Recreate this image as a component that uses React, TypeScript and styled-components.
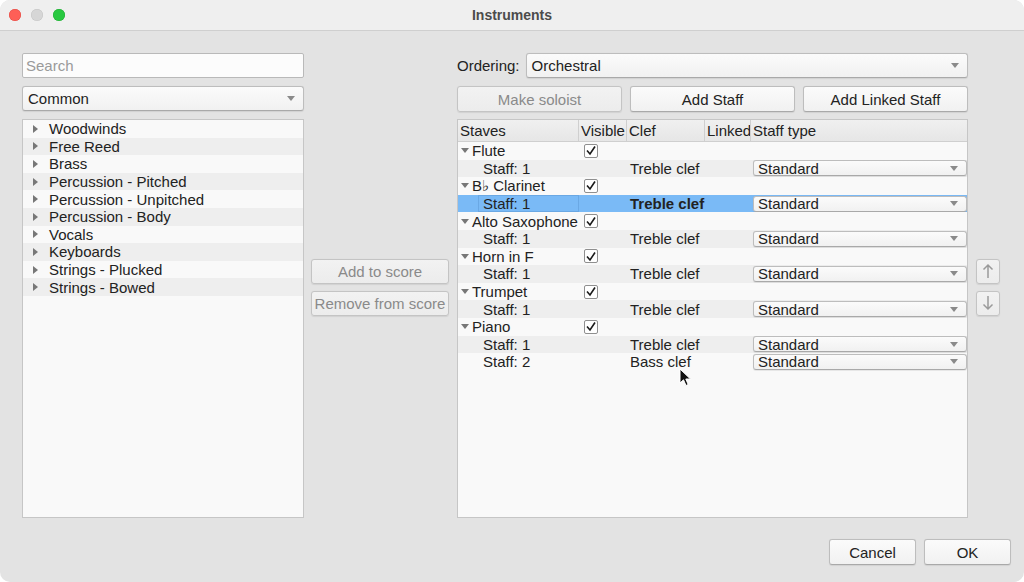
import React from "react";
import styled, { createGlobalStyle, css } from "styled-components";

const GlobalStyle = createGlobalStyle`
  html, body {
    margin: 0;
    padding: 0;
    background: #ffffff;
  }
  body {
    font-family: "Liberation Sans", Arial, sans-serif;
    font-size: 15px;
    color: #222;
  }
`;

const families = [
  "Woodwinds",
  "Free Reed",
  "Brass",
  "Percussion - Pitched",
  "Percussion - Unpitched",
  "Percussion - Body",
  "Vocals",
  "Keyboards",
  "Strings - Plucked",
  "Strings - Bowed",
];

type Row =
  | { kind: "part"; name: string }
  | { kind: "staff"; name: string; clef: string; selected?: boolean };

const rows: Row[] = [
  { kind: "part", name: "Flute" },
  { kind: "staff", name: "Staff: 1", clef: "Treble clef" },
  { kind: "part", name: "B\u266D Clarinet" },
  { kind: "staff", name: "Staff: 1", clef: "Treble clef", selected: true },
  { kind: "part", name: "Alto Saxophone" },
  { kind: "staff", name: "Staff: 1", clef: "Treble clef" },
  { kind: "part", name: "Horn in F" },
  { kind: "staff", name: "Staff: 1", clef: "Treble clef" },
  { kind: "part", name: "Trumpet" },
  { kind: "staff", name: "Staff: 1", clef: "Treble clef" },
  { kind: "part", name: "Piano" },
  { kind: "staff", name: "Staff: 1", clef: "Treble clef" },
  { kind: "staff", name: "Staff: 2", clef: "Bass clef" },
];

const COLS = "121px 48px 78px 46px 1fr";

const App = () => {
  return (
    <>
      <GlobalStyle />
      <Window>
        <TitleBar>
          <Lights>
            <Light $color="#fe5f57" $border="#e14942" />
            <Light $color="#d6d6d6" $border="#c4c4c4" />
            <Light $color="#28c840" $border="#1eaa32" />
          </Lights>
          <Title>Instruments</Title>
        </TitleBar>

        <Body>
          <Main>
            <LeftColumn>
              <SearchInput placeholder="Search" />
              <Combo>
                <span>Common</span>
                <Caret />
              </Combo>
              <ListBox>
                {families.map((f, i) => (
                  <ListRow key={f} $odd={i % 2 === 1}>
                    <RightTriangle />
                    <span>{f}</span>
                  </ListRow>
                ))}
              </ListBox>
            </LeftColumn>

            <MiddleColumn>
              <Button disabled>Add to score</Button>
              <Button disabled>Remove from score</Button>
            </MiddleColumn>

            <RightColumn>
              <OrderingRow>
                <Label>Ordering:</Label>
                <Combo>
                  <span>Orchestral</span>
                  <Caret />
                </Combo>
              </OrderingRow>
              <ButtonRow>
                <Button disabled>Make soloist</Button>
                <Button>Add Staff</Button>
                <Button>Add Linked Staff</Button>
              </ButtonRow>
              <Table>
                <HeaderRow>
                  <HeaderCell>Staves</HeaderCell>
                  <HeaderCell>Visible</HeaderCell>
                  <HeaderCell>Clef</HeaderCell>
                  <HeaderCell>Linked</HeaderCell>
                  <HeaderCell $last>Staff type</HeaderCell>
                </HeaderRow>
                {rows.map((r, i) =>
                  r.kind === "part" ? (
                    <TableRow key={i} $odd={i % 2 === 1}>
                      <Cell>
                        <DownTriangle />
                        {r.name}
                      </Cell>
                      <Cell $center>
                        <Check>
                          <svg width="12" height="11" viewBox="0 0 12 11">
                            <path
                              d="M2 5.5 L5 9 L10 1.5"
                              fill="none"
                              stroke="#1a1a1a"
                              strokeWidth="1.6"
                            />
                          </svg>
                        </Check>
                      </Cell>
                      <Cell />
                      <Cell />
                      <Cell />
                    </TableRow>
                  ) : (
                    <TableRow key={i} $odd={i % 2 === 1} $selected={r.selected}>
                      <Cell $indent $focus={r.selected}>
                        {r.name}
                      </Cell>
                      <Cell />
                      <Cell $bold={r.selected}>{r.clef}</Cell>
                      <Cell />
                      <Cell $plain>
                        <CellCombo>
                          <span>Standard</span>
                          <Caret />
                        </CellCombo>
                      </Cell>
                    </TableRow>
                  )
                )}
                <Cursor>
                  <svg width="14" height="20" viewBox="0 0 14 20">
                    <path
                      d="M1 1 L1 15 L4.5 11.8 L7 17.5 L9.2 16.5 L6.8 11 L11.5 11 Z"
                      fill="#111"
                      stroke="#fff"
                      strokeWidth="1"
                      strokeLinejoin="round"
                    />
                  </svg>
                </Cursor>
              </Table>
            </RightColumn>

            <ArrowColumn>
              <ArrowButton disabled>
                <svg width="12" height="16" viewBox="0 0 12 16">
                  <path d="M6 2 V15 M1.5 6.5 L6 2 L10.5 6.5" fill="none" stroke="#9a9a9a" strokeWidth="1.5" />
                </svg>
              </ArrowButton>
              <ArrowButton disabled>
                <svg width="12" height="16" viewBox="0 0 12 16">
                  <path d="M6 1 V14 M1.5 9.5 L6 14 L10.5 9.5" fill="none" stroke="#9a9a9a" strokeWidth="1.5" />
                </svg>
              </ArrowButton>
            </ArrowColumn>
          </Main>

          <Footer>
            <Button $wide>Cancel</Button>
            <Button $wide>OK</Button>
          </Footer>
        </Body>
      </Window>
    </>
  );
};

const Window = styled.div`
  width: 1024px;
  height: 582px;
  display: flex;
  flex-direction: column;
  background: #e3e3e3;
  border-radius: 10px;
  overflow: hidden;
  box-sizing: border-box;
`;

const TitleBar = styled.div`
  position: relative;
  height: 31px;
  flex: none;
  display: flex;
  align-items: center;
  justify-content: center;
  background: #efefef;
  border-bottom: 1px solid #cfcfcf;
  box-sizing: border-box;
`;

const Lights = styled.div`
  position: absolute;
  left: 9px;
  top: 9px;
  display: flex;
  gap: 10px;
`;

const Light = styled.div<{ $color: string; $border: string }>`
  width: 12px;
  height: 12px;
  border-radius: 50%;
  background: ${(p) => p.$color};
  box-shadow: inset 0 0 0 0.5px ${(p) => p.$border};
`;

const Title = styled.div`
  font-size: 14px;
  font-weight: bold;
  color: #4b4b4b;
`;

const Body = styled.div`
  flex: 1;
  display: flex;
  flex-direction: column;
  padding: 22px 13px 17px 22px;
  box-sizing: border-box;
`;

const Main = styled.div`
  height: 465px;
  display: flex;
`;

const LeftColumn = styled.div`
  width: 282px;
  flex: none;
  display: flex;
  flex-direction: column;
  gap: 8px;
`;

const MiddleColumn = styled.div`
  width: 138px;
  flex: none;
  margin-left: 7px;
  display: flex;
  flex-direction: column;
  justify-content: center;
  gap: 7px;
  padding-top: 3px;

  & > button {
    flex: none;
    height: 25px;
  }
`;

const RightColumn = styled.div`
  width: 511px;
  flex: none;
  margin-left: 8px;
  display: flex;
  flex-direction: column;
  gap: 8px;
`;

const ArrowColumn = styled.div`
  width: 24px;
  flex: none;
  margin-left: 8px;
  display: flex;
  flex-direction: column;
  justify-content: center;
  gap: 7px;
  padding-top: 3px;
`;

const SearchInput = styled.input`
  height: 25px;
  box-sizing: border-box;
  border: 1px solid #b9b9b9;
  border-radius: 2px;
  background: #fcfcfc;
  padding: 0 3px;
  font: inherit;
  font-size: 15px;
  color: #222;
  outline: none;
  &::placeholder {
    color: #9a9a9a;
  }
`;

const controlSurface = css`
  box-sizing: border-box;
  border: 1px solid #bdbdbd;
  border-bottom-color: #a9a9a9;
  border-radius: 3px;
  background: linear-gradient(#fbfbfb, #f1f1f1);
  box-shadow: 0 0.5px 1px rgba(0, 0, 0, 0.08);
`;

const Combo = styled.div`
  ${controlSurface};
  flex: 1;
  height: 25px;
  min-height: 25px;
  max-height: 25px;
  display: flex;
  align-items: center;
  justify-content: space-between;
  padding: 0 8px 0 5px;
  color: #222;
`;

const Caret = styled.span`
  width: 0;
  height: 0;
  border-left: 4.5px solid transparent;
  border-right: 4.5px solid transparent;
  border-top: 5px solid #8a8a8a;
`;

const ListBox = styled.div`
  flex: 1;
  box-sizing: border-box;
  border: 1px solid #c6c6c6;
  background: #f9f9f9;
  display: grid;
  grid-auto-rows: 17.6px;
  align-content: start;
`;

const ListRow = styled.div<{ $odd?: boolean }>`
  display: flex;
  align-items: center;
  gap: 11px;
  padding-left: 10px;
  background: ${(p) => (p.$odd ? "#eeeeee" : "#f9f9f9")};
  white-space: nowrap;
`;

const RightTriangle = styled.span`
  width: 0;
  height: 0;
  border-top: 4.5px solid transparent;
  border-bottom: 4.5px solid transparent;
  border-left: 5px solid #777;
`;

const Button = styled.button<{ $wide?: boolean }>`
  ${controlSurface};
  flex: 1;
  height: 26px;
  padding: 0 2px;
  font: inherit;
  font-size: 15px;
  color: #222;
  white-space: nowrap;
  &:disabled {
    color: #8a8a8a;
    background: linear-gradient(#f2f2f2, #ececec);
    border-color: #c4c4c4;
  }
  ${(p) =>
    p.$wide &&
    css`
      flex: none;
      width: 87px;
    `}
`;

const OrderingRow = styled.div`
  height: 25px;
  display: flex;
  align-items: center;
  gap: 6px;
`;

const Label = styled.span`
  color: #222;
`;

const ButtonRow = styled.div`
  display: grid;
  grid-template-columns: 1fr 1fr 1fr;
  gap: 8px;
  margin-bottom: -1px;
`;

const Table = styled.div`
  position: relative;
  flex: 1;
  box-sizing: border-box;
  border: 1px solid #c6c6c6;
  background: #f9f9f9;
  display: flex;
  flex-direction: column;
`;

const HeaderRow = styled.div`
  display: grid;
  grid-template-columns: ${COLS};
  height: 22px;
  flex: none;
  background: linear-gradient(#f0f0f0, #e6e6e6);
  border-bottom: 1px solid #cfcfcf;
  box-sizing: border-box;
`;

const HeaderCell = styled.div<{ $last?: boolean }>`
  display: flex;
  align-items: center;
  padding-left: 2px;
  border-right: ${(p) => (p.$last ? "none" : "1px solid #cfcfcf")};
  white-space: nowrap;
  overflow: hidden;
`;

const TableRow = styled.div<{ $odd?: boolean; $selected?: boolean }>`
  display: grid;
  grid-template-columns: ${COLS};
  height: 17.6px;
  flex: none;
  background: ${(p) =>
    p.$selected ? "#7abaf6" : p.$odd ? "#eeeeee" : "#f9f9f9"};
`;

const Cell = styled.div<{
  $indent?: boolean;
  $center?: boolean;
  $bold?: boolean;
  $focus?: boolean;
  $plain?: boolean;
}>`
  display: flex;
  align-items: center;
  white-space: nowrap;
  overflow: hidden;
  box-sizing: border-box;
  padding-left: ${(p) => (p.$indent ? "25px" : p.$plain ? "2px" : "3px")};
  font-weight: ${(p) => (p.$bold ? "bold" : "normal")};
  ${(p) =>
    p.$center &&
    css`
      padding-left: 5px;
    `}
  ${(p) =>
    p.$focus &&
    css`
      box-shadow: inset 0 0 0 1px #6aa8e4;
      margin-left: 20px;
      padding-left: 5px;
      width: calc(100% - 20px);
    `}
`;

const DownTriangle = styled.span`
  width: 0;
  height: 0;
  margin: 0 3px 0 0;
  border-left: 4.5px solid transparent;
  border-right: 4.5px solid transparent;
  border-top: 5px solid #777;
`;

const Check = styled.span`
  width: 14px;
  height: 14px;
  box-sizing: border-box;
  border: 1px solid #8f8f8f;
  border-radius: 2px;
  background: #fff;
  display: flex;
  align-items: center;
  justify-content: center;
`;

const CellCombo = styled.div`
  ${controlSurface};
  width: 100%;
  height: 16px;
  display: flex;
  align-items: center;
  justify-content: space-between;
  padding: 0 8px 0 4px;
  border-radius: 3px;
  color: #222;
`;

const ArrowButton = styled.button`
  ${controlSurface};
  width: 24px;
  height: 25px;
  padding: 0;
  display: flex;
  align-items: center;
  justify-content: center;
  background: linear-gradient(#f2f2f2, #ececec);
  border-color: #c4c4c4;
`;

const Cursor = styled.div`
  position: absolute;
  left: 221px;
  top: 248px;
  width: 14px;
  height: 20px;
  pointer-events: none;
`;

const Footer = styled.div`
  margin-top: auto;
  display: flex;
  justify-content: flex-end;
  gap: 8px;
`;

export default App;
